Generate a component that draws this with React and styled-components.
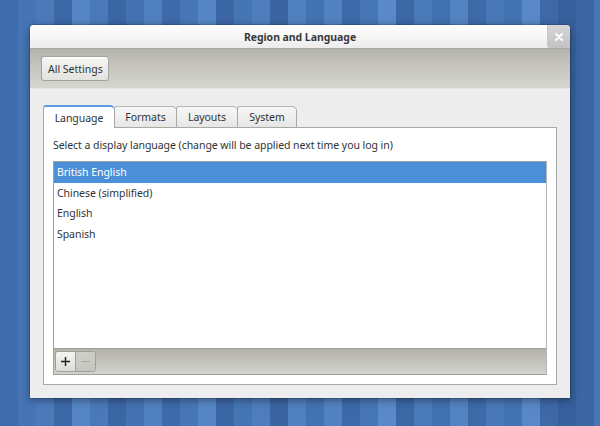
import React, { useState } from 'react';
import styled, { createGlobalStyle } from 'styled-components';

const stripes = [
  '#3f6cab', '#4674b4', '#4b7abb', '#3d68a6', '#5585c4', '#4a79b9', '#3b66a4', '#4472b2',
  '#5080bf', '#3e6aa9', '#4877b7', '#5686c5', '#3c67a5', '#4575b5', '#4d7dbd', '#3a65a2',
  '#4f7fbf', '#4372b1', '#5282c2', '#3d69a8', '#4776b6', '#5989c8', '#3c68a6', '#4a7aba',
  '#4170b0', '#5383c3', '#3e6aa8', '#4878b8', '#4373b3', '#5888c7', '#3d69a7', '#36609c',
  '#3b66a3', '#4676b6',
];

const stripeBg = `linear-gradient(to right, ${stripes
  .map((c, i) => `${c} ${i * 18}px, ${c} ${(i + 1) * 18}px`)
  .join(', ')})`;

const GlobalStyle = createGlobalStyle`
  html, body {
    margin: 0;
    padding: 0;
    width: 600px;
    height: 426px;
    overflow: hidden;
  }
  body {
    background: ${stripeBg};
    font-family: "Noto Sans", "Open Sans", "DejaVu Sans", sans-serif;
    font-size: 10.5px;
    letter-spacing: -0.05px;
    color: #2e3436;
  }
`;

const Desktop = styled.div`
  padding: 25px 30px;
`;

const Window = styled.div`
  width: 540px;
  height: 373px;
  display: flex;
  flex-direction: column;
  background: #ededed;
  border-radius: 4px 4px 0 0;
  box-shadow: 0 2px 9px rgba(0, 0, 0, 0.4), 0 0 0 1px rgba(0, 0, 0, 0.12);
  overflow: hidden;
`;

const TitleBar = styled.div`
  position: relative;
  height: 23px;
  display: flex;
  align-items: center;
  justify-content: center;
  background: linear-gradient(to bottom, #ffffff, #ececec);
  border-bottom: 1px solid #a9a9a4;
  font-weight: bold;
  color: #3a3a3a;
`;

const CloseButton = styled.div`
  position: absolute;
  right: 0;
  top: 0;
  width: 22px;
  height: 23px;
  display: flex;
  align-items: center;
  justify-content: center;
  background: linear-gradient(to bottom, #d5d5d5, #c2c2c2);
  border-left: 1px solid #c8c8c8;
  border-bottom-left-radius: 3px;
`;

const Toolbar = styled.div`
  height: 39px;
  display: flex;
  align-items: center;
  padding: 0 11px;
  background: linear-gradient(to bottom, #b6b5ac, #d6d6d1);
  border-bottom: 1px solid #e4e4e1;
`;

const Button = styled.button`
  height: 25px;
  padding: 0 5px 0 6px;
  font: inherit;
  color: #2e3436;
  background: linear-gradient(to bottom, #f6f6f5, #e2e2df);
  border: 1px solid #a3a39d;
  border-radius: 3px;
  box-shadow: inset 0 1px 0 #ffffff;
`;

const Body = styled.div`
  flex: 1;
  display: flex;
  flex-direction: column;
  padding: 15px 13px 13px;
`;

const Tabs = styled.div`
  display: flex;
  padding-left: 1px;
  height: 23px;
  align-items: flex-end;
`;

const Tab = styled.div`
  width: ${(p) => p.$width}px;
  height: ${(p) => (p.$active ? '23px' : '21px')};
  display: flex;
  align-items: center;
  justify-content: center;
  box-sizing: border-box;
  border: 1px solid #a8a8a8;
  border-bottom: none;
  margin-left: -1px;
  border-radius: 3px 5px 0 0;
  background: ${(p) =>
    p.$active ? '#ffffff' : 'linear-gradient(to bottom, #f7f7f7, #e6e6e6)'};
  border-top: ${(p) => (p.$active ? '2px solid #5b9ae0' : '1px solid #b4b4b4')};
  position: relative;
  z-index: ${(p) => (p.$active ? 1 : 0)};
  margin-bottom: ${(p) => (p.$active ? '-1px' : '0')};
  color: #2e3436;
`;

const Panel = styled.div`
  flex: 1;
  display: flex;
  flex-direction: column;
  background: #ffffff;
  border: 1px solid #a8a8a8;
  padding: 0 9px 9px;
`;

const Hint = styled.div`
  height: 33px;
  display: flex;
  align-items: center;
`;

const ListBox = styled.div`
  flex: 1;
  display: flex;
  flex-direction: column;
  border: 1px solid #a0a0a0;
  border-right-color: #b5b5b5;
`;

const Rows = styled.div`
  flex: 1;
  background: #ffffff;
`;

const Row = styled.div`
  height: 20.5px;
  display: flex;
  align-items: center;
  padding-left: 3px;
  background: ${(p) => (p.$selected ? '#4a8fd8' : 'transparent')};
  color: ${(p) => (p.$selected ? '#ffffff' : '#2e3436')};
`;

const ListTools = styled.div`
  height: 25px;
  display: flex;
  align-items: center;
  padding-left: 1px;
  background: linear-gradient(to bottom, #b4b3aa, #d2d2cd);
  border-top: 1px solid #9e9d96;
`;

const ToolGroup = styled.div`
  display: flex;
  border: 1px solid #a0a09a;
  border-radius: 3px;
  overflow: hidden;
`;

const ToolButton = styled.div`
  width: 19px;
  height: 19px;
  display: flex;
  align-items: center;
  justify-content: center;
  background: ${(p) =>
    p.$disabled ? 'linear-gradient(to bottom, #cfcfca, #c6c6c0)' : 'linear-gradient(to bottom, #f4f4f2, #dcdcd8)'};
  & + & {
    border-left: 1px solid #a0a09a;
  }
`;

const languages = ['British English', 'Chinese (simplified)', 'English', 'Spanish'];
const tabs = [
  { name: 'Language', width: 72 },
  { name: 'Formats', width: 63 },
  { name: 'Layouts', width: 62 },
  { name: 'System', width: 60 },
];

const App = () => {
  const [selected, setSelected] = useState(0);
  const [tab, setTab] = useState(0);

  return (
    <>
      <GlobalStyle />
      <Desktop>
        <Window>
          <TitleBar>
            Region and Language
            <CloseButton>
              <svg width="8" height="8" viewBox="0 0 8 8">
                <path d="M1 1 L7 7 M7 1 L1 7" stroke="#ffffff" strokeWidth="2" strokeLinecap="round" />
              </svg>
            </CloseButton>
          </TitleBar>
          <Toolbar>
            <Button>All Settings</Button>
          </Toolbar>
          <Body>
            <Tabs>
              {tabs.map((t, i) => (
                <Tab key={t.name} $active={i === tab} $width={t.width} onClick={() => setTab(i)}>
                  {t.name}
                </Tab>
              ))}
            </Tabs>
            <Panel>
              <Hint>Select a display language (change will be applied next time you log in)</Hint>
              <ListBox>
                <Rows>
                  {languages.map((l, i) => (
                    <Row key={l} $selected={i === selected} onClick={() => setSelected(i)}>
                      {l}
                    </Row>
                  ))}
                </Rows>
                <ListTools>
                  <ToolGroup>
                    <ToolButton>
                      <svg width="9" height="9" viewBox="0 0 9 9">
                        <path d="M4.5 0 V9 M0 4.5 H9" stroke="#1e1e1e" strokeWidth="1.4" />
                      </svg>
                    </ToolButton>
                    <ToolButton $disabled>
                      <svg width="9" height="9" viewBox="0 0 9 9">
                        <path d="M0 4.5 H9" stroke="#a8a8a2" strokeWidth="1.2" />
                      </svg>
                    </ToolButton>
                  </ToolGroup>
                </ListTools>
              </ListBox>
            </Panel>
          </Body>
        </Window>
      </Desktop>
    </>
  );
};

export default App;
